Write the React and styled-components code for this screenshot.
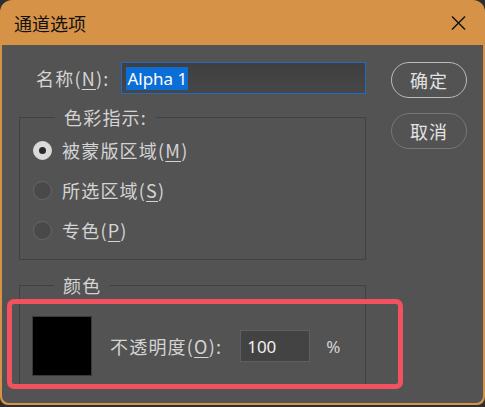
import { createGlobalStyle, styled } from "styled-components";

const GlobalStyle = createGlobalStyle`
  html, body {
    margin: 0;
    padding: 0;
    background: #2e2e2e;
  }
  body {
    font-family: "Noto Sans CJK SC", "Noto Sans", sans-serif;
  }
`;

const Window = styled.div`
  width: 485px;
  height: 405px;
  background: #d69246;
  border-radius: 12px 12px 8px 8px;
  display: flex;
  flex-direction: column;
  overflow: hidden;
`;

const TitleBar = styled.div`
  height: 45px;
  flex: none;
  display: flex;
  align-items: center;
  justify-content: space-between;
  padding: 0 19px 0 14px;
  color: #111;
  font-size: 18px;
  line-height: 24px;
`;

const Body = styled.div`
  position: relative;
  flex: 1;
  margin: 0 2px 2px;
  background: #535353;
  border-radius: 0 0 7px 7px;
  display: flex;
  gap: 25px;
  padding: 17px 0 0 17px;
  color: #d4d4d4;
  font-size: 18px;
  letter-spacing: 1.2px;
`;

const LeftColumn = styled.div`
  width: 347px;
  display: flex;
  flex-direction: column;
`;

const NameRow = styled.div`
  display: flex;
  align-items: center;
  height: 32px;
  padding-left: 17px;
`;

const Label = styled.span`
  white-space: nowrap;
  margin-right: ${(p) => p.$gap || 0}px;
  line-height: 24px;
`;

const Key = styled.span`
  text-decoration: underline;
  text-underline-offset: 3px;
  text-decoration-thickness: 1px;
`;

const TextField = styled.div`
  box-sizing: border-box;
  width: 248px;
  height: 32px;
  border: 1px solid #1f6bc4;
  background: linear-gradient(#3f3f3f, #474747);
  display: flex;
  align-items: center;
  padding-left: 4px;
`;

const Selected = styled.span`
  background: #0a6ed6;
  color: #fff;
  font-family: "Noto Sans", "Open Sans", sans-serif;
  font-size: 17px;
  letter-spacing: 0;
  line-height: 23px;
  padding: 0 1px;
`;

const Group = styled.fieldset`
  margin: ${(p) => p.$top}px 0 0;
  padding: ${(p) => p.$pad};
  border: 1px solid #414141;
  min-width: 0;
`;

const Legend = styled.legend`
  margin-left: 22px;
  padding: 0 9px;
  line-height: 24px;
`;

const RadioRow = styled.div`
  height: 40px;
  display: flex;
  align-items: center;
  gap: 10px;
`;

const Radio = styled.span`
  box-sizing: border-box;
  width: 19px;
  height: 19px;
  border-radius: 50%;
  flex: none;
  display: flex;
  align-items: center;
  justify-content: center;
  background: ${(p) => (p.$on ? "#dadada" : "#494949")};
  border: 1px solid ${(p) => (p.$on ? "#dadada" : "#666")};

  &::after {
    content: "";
    display: ${(p) => (p.$on ? "block" : "none")};
    width: 7px;
    height: 7px;
    border-radius: 50%;
    background: #2a2a2a;
  }
`;

const ColorRow = styled.div`
  display: flex;
  align-items: center;
`;

const Swatch = styled.div`
  box-sizing: border-box;
  width: 60px;
  height: 60px;
  background: #000;
  border: 1px solid #3a3a3a;
  margin-right: 18px;
`;

const NumberField = styled.div`
  box-sizing: border-box;
  width: 70px;
  height: 32px;
  background: #434343;
  border: 1px solid #5f5f5f;
  display: flex;
  align-items: center;
  padding-left: 6px;
  margin-right: 16px;
  color: #f0f0f0;
  font-family: "Noto Sans", "Open Sans", sans-serif;
  font-size: 17px;
  letter-spacing: 0;
`;

const Percent = styled.span`
  font-family: "Noto Sans", "Open Sans", sans-serif;
  font-size: 17px;
  letter-spacing: 0;
`;

const ButtonColumn = styled.div`
  display: flex;
  flex-direction: column;
  gap: 15px;
`;

const PillButton = styled.button`
  box-sizing: border-box;
  width: 76px;
  height: 36px;
  border-radius: 18px;
  background: transparent;
  border: 1.5px solid ${(p) => (p.$primary ? "#bcbcbc" : "#777")};
  color: #e2e2e2;
  font-family: "Noto Sans CJK SC", sans-serif;
  font-size: 18px;
  letter-spacing: 1px;
  padding: 0;
`;

const Highlight = styled.div`
  position: absolute;
  left: 5px;
  top: 254px;
  width: 396px;
  height: 90px;
  box-sizing: border-box;
  border: 5px solid #f2525f;
  border-radius: 7px;
  pointer-events: none;
`;

const CloseIcon = () => (
  <svg width="15" height="14" viewBox="0 0 15 14">
    <path d="M1 0.5 L14 13.5 M14 0.5 L1 13.5" stroke="#111" strokeWidth="1.4" />
  </svg>
);

const modes = [
  { text: "被蒙版区域", key: "M", on: true },
  { text: "所选区域", key: "S" },
  { text: "专色", key: "P" },
];

export default function App() {
  return (
    <>
      <GlobalStyle />
      <Window>
        <TitleBar>
          <span>通道选项</span>
          <CloseIcon />
        </TitleBar>
        <Body>
          <LeftColumn>
            <NameRow>
              <Label $gap={12}>
                名称(<Key>N</Key>):
              </Label>
              <TextField>
                <Selected>Alpha 1</Selected>
              </TextField>
            </NameRow>

            <Group $top={11} $pad="1px 0 9px 13px">
              <Legend>色彩指示:</Legend>
              {modes.map((m) => (
                <RadioRow key={m.key}>
                  <Radio $on={m.on} />
                  <Label>
                    {m.text}(<Key>{m.key}</Key>)
                  </Label>
                </RadioRow>
              ))}
            </Group>

            <Group $top={13} $pad="19px 0 9px 12px">
              <Legend>颜色</Legend>
              <ColorRow>
                <Swatch />
                <Label $gap={18}>
                  不透明度(<Key>O</Key>):
                </Label>
                <NumberField>100</NumberField>
                <Percent>%</Percent>
              </ColorRow>
            </Group>
          </LeftColumn>

          <ButtonColumn>
            <PillButton $primary>确定</PillButton>
            <PillButton>取消</PillButton>
          </ButtonColumn>

          <Highlight />
        </Body>
      </Window>
    </>
  );
}
